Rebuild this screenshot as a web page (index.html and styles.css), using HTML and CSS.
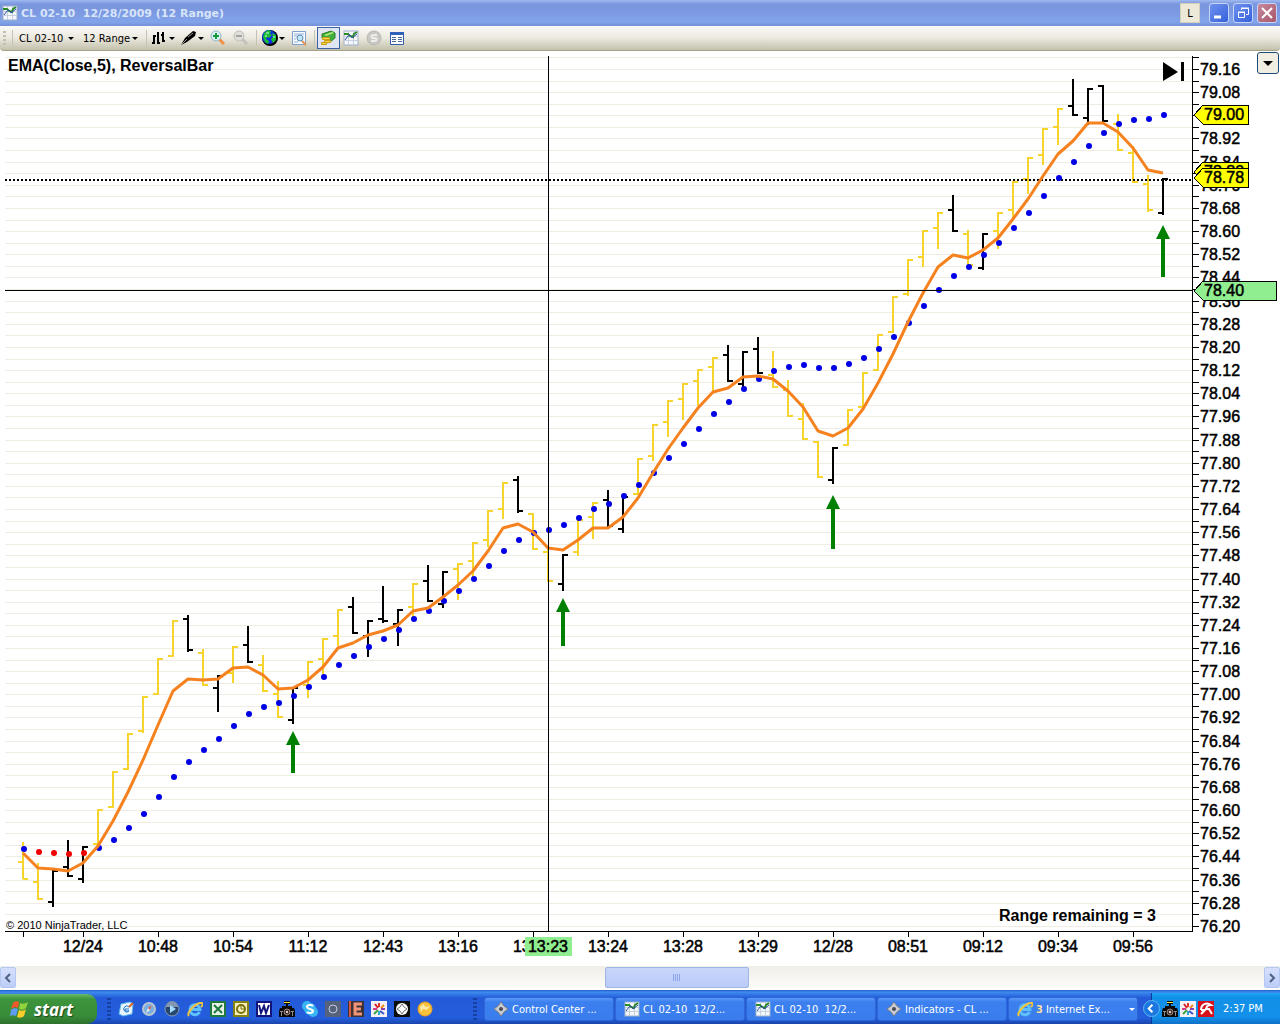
FILE: index.html
```html
<!DOCTYPE html>
<html lang="en">
  <head>
    <meta charset="UTF-8" />
    <meta name="viewport" content="width=device-width, initial-scale=1.0" />
    <title>CL 02-10 12/28/2009 (12 Range)</title>
    <link rel="stylesheet" href="styles.css" />
  </head>
  <body>
    <!-- shared icons -->
    <svg class="sprite" aria-hidden="true">
      <symbol id="i-chart" viewBox="0 0 16 16">
        <rect x="1" y="1" width="14" height="14" fill="#f4f7fb" stroke="#9fb0c8" />
        <path d="M1 6.500h14M1 10.500h14M5.500 1v14M10.500 1v14" stroke="#c6cfdd" />
        <path d="M1 4h4l2 2 3 1 1-3 3-2" fill="none" stroke="#2c8a2c" stroke-width="2" />
        <path d="M2 10l3-4 2-1 2 3 5-4" fill="none" stroke="#2f4fa8" />
      </symbol>
      <symbol id="i-ninja" viewBox="0 0 16 16">
        <path d="M8 1l3 4 4 3-4 3-3 4-3-4-4-3 4-3z" fill="#c9ccd2" stroke="#7a7d85" />
        <circle cx="8" cy="8" r="2" fill="#4a4d55" />
      </symbol>
      <symbol id="i-ie" viewBox="0 0 16 16">
        <path d="M12.500 11A5 5 0 1 1 13 8.500H5" fill="none" stroke="#5fc0fa" stroke-width="3" />
        <path d="M2 15C-1 12 9 1 15 2c2 1-1 4-1 4" fill="none" stroke="#f3c63c" stroke-width="2" />
      </symbol>
      <symbol id="i-camera" viewBox="0 0 16 16">
        <path d="M5 0h6v3H9v2h4v2h2l1 3v6H0v-6l1-3h2V5h4V3H5z" fill="#0a0a0a" />
        <path d="M5 1h6v1H5z" fill="#f5e53c" />
        <path d="M2.500 11v4M13.500 11v4M1 10.500h3M12 10.500h3" stroke="#8c8c8c" />
        <circle cx="8" cy="11" r="3" fill="#4a3030" stroke="#a08878" />
        <circle cx="8" cy="11" r="1" fill="#fff" />
      </symbol>
      <symbol id="i-burst" viewBox="0 0 16 16">
        <rect width="16" height="16" fill="#f4f0f4" />
        <g stroke-width="2">
          <path d="M8 6V2" stroke="#e0362c" /><path d="M10 7l3-3" stroke="#f08a1c" />
          <path d="M10 8h4" stroke="#8a3fb0" /><path d="M9 10l4 3" stroke="#3a56c8" />
          <path d="M8 10v4" stroke="#2aa8c8" /><path d="M7 9l-4 4" stroke="#39a845" />
          <path d="M6 8H2" stroke="#d63a8a" /><path d="M7 7L4 3" stroke="#d8242c" />
        </g>
      </symbol>
    </svg>

    <header class="titlebar">
      <svg class="icon"><use href="#i-chart" /></svg>
      <h1>CL 02-10&nbsp; 12/28/2009 (12 Range)</h1>
      <button class="link-btn" title="Link">L</button>
      <div class="window-btns">
        <button class="win" aria-label="Minimize">
          <svg viewBox="0 0 18 18"><path d="M4 13h7" stroke="#fff" stroke-width="3" /></svg>
        </button>
        <button class="win" aria-label="Restore">
          <svg viewBox="0 0 18 18" fill="none" stroke="#fff">
            <path d="M7.500 6V4.500h7v6H12M7 4h8" />
            <path d="M4.500 8.500h6v5h-6zM4 8h7" />
          </svg>
        </button>
        <button class="win close" aria-label="Close">
          <svg viewBox="0 0 18 18"><path d="M4 4l10 10M14 4L4 14" stroke="#fff" stroke-width="2" /></svg>
        </button>
      </div>
    </header>

    <nav class="toolbar">
      <span class="grip"></span>
      <span class="sep"></span>
      <button class="tool text">CL 02-10 <i class="caret"></i></button>
      <button class="tool text">12 Range <i class="caret"></i></button>
      <span class="sep"></span>
      <button class="tool drop" aria-label="Chart style">
        <svg class="icon" viewBox="0 0 16 16" fill="none" stroke="#000" stroke-width="2">
          <path d="M2 5v9M0 13h2M2 6h2M6 2v12M6 13h2M11 2v10M9 5h2M11 11h2" />
        </svg>
        <i class="caret"></i>
      </button>
      <button class="tool drop" aria-label="Drawing tools">
        <svg class="icon" viewBox="0 0 16 16">
          <path d="M0 15l4-7 8-7 3 1-1 4-8 6z" fill="#000" />
          <path d="M0 15l6-6M7 7l5-4" stroke="#8f8f8f" />
        </svg>
        <i class="caret"></i>
      </button>
      <button class="tool" aria-label="Zoom in">
        <svg class="icon" viewBox="0 0 16 16">
          <path d="M9 9l5 5" stroke="#f0914a" stroke-width="3" />
          <circle cx="6" cy="6" r="5" fill="#d8f0f2" stroke="#8fb9c8" />
          <path d="M3 6h6M6 3v6" stroke="#159a3c" stroke-width="2" />
        </svg>
      </button>
      <button class="tool" aria-label="Zoom out" disabled>
        <svg class="icon" viewBox="0 0 16 16">
          <path d="M9 9l5 5" stroke="#c3c1bb" stroke-width="3" />
          <circle cx="6" cy="6" r="5" fill="#e0dfdb" stroke="#c0beb8" />
          <path d="M3 6h6" stroke="#a6a49e" stroke-width="2" />
        </svg>
      </button>
      <span class="sep"></span>
      <button class="tool drop" aria-label="Data series">
        <svg class="icon" viewBox="0 0 16 16">
          <circle cx="8" cy="8" r="8" fill="#000" />
          <circle cx="7" cy="7" r="7" fill="#1030e0" />
          <path d="M2 3l4-3 3 1-1 3 2 1-3 3-2-1-1 2 3 2-1 3-3-2-2-5zM10 3l4 2v5l-3 3-2-4 2-2z" fill="#18c030" />
          <path d="M4 3h3M3 6h2M11 7h2" stroke="#d8f4ff" />
        </svg>
        <i class="caret"></i>
      </button>
      <button class="tool" aria-label="Data box">
        <svg class="icon" viewBox="0 0 16 16">
          <path d="M1.500 1.500h13v13h-13z" fill="#f6f9fe" stroke="#7fa0cc" />
          <path d="M3 4h10M3 6h3M3 9h2M3 12h4" stroke="#8fb0d8" />
          <path d="M11 11l4 4" stroke="#e8924c" stroke-width="2" />
          <circle cx="9" cy="8" r="3" fill="#c3e6f6" stroke="#5a8ab8" />
        </svg>
      </button>
      <span class="sep"></span>
      <button class="tool selected" aria-label="Chart trader">
        <svg class="icon" viewBox="0 0 16 16">
          <path d="M2 4l9-3 4 2v5l-5 4-3-1-5-3z" fill="#3fae3c" stroke="#2f8028" />
          <path d="M4 5l8-3 2 1-8 3z" fill="#b4e878" />
          <path d="M2.500 7.500h7v2h-7zM4.500 10.500h6v2h-6zM1.500 12.500h5v2h-5z" fill="#f8d83c" stroke="#c89c18" />
        </svg>
      </button>
      <button class="tool" aria-label="Indicators"><svg class="icon"><use href="#i-chart" /></svg></button>
      <button class="tool" aria-label="Strategies" disabled>
        <svg class="icon" viewBox="0 0 16 16">
          <circle cx="8" cy="8" r="7" fill="#c9c8c4" stroke="#b8b7b2" />
          <path d="M11 5H8C4 5 5 8 8 8s4 3 0 3H5" fill="none" stroke="#efede9" stroke-width="2" />
        </svg>
      </button>
      <button class="tool" aria-label="Properties">
        <svg class="icon" viewBox="0 0 16 16">
          <path d="M1.500 2.500h13v12h-13z" fill="#fff" stroke="#2f5fa8" />
          <path d="M1 3.500h14" stroke="#2f62b8" stroke-width="3" />
          <path d="M3 7.500h4M3 9.500h4M3 11.500h4M9 7.500h4M9 9.500h4M9 11.500h4" stroke="#4a6a9c" />
        </svg>
      </button>
    </nav>

    <main class="chart">
      <svg id="chart" viewBox="0 51 1280 915" role="img" aria-label="CL 02-10 range chart"></svg>
      <button class="chart-menu" aria-label="Axis menu"><i class="caret"></i></button>
    </main>

    <div class="scrollbar">
      <button class="arrow" aria-label="Scroll left">
        <svg viewBox="0 0 14 16"><path d="M9 4L5 8l4 4" fill="none" stroke="#4d6185" stroke-width="2" /></svg>
      </button>
      <div class="track"><div class="thumb"><i></i><i></i><i></i><i></i></div></div>
      <button class="arrow" aria-label="Scroll right">
        <svg viewBox="0 0 14 16"><path d="M5 4l4 4-4 4" fill="none" stroke="#4d6185" stroke-width="2" /></svg>
      </button>
    </div>

    <footer class="taskbar">
      <button class="start">
        <svg viewBox="0 0 20 18">
          <path d="M3 3c2-2 4-2 6-1L8 8C6 7 4 7 1 9z" fill="#f0582a" />
          <path d="M10 3c2 1 5 1 8-1l-2 6c-2 2-5 2-7 1z" fill="#8fd43c" />
          <path d="M1 10c2-2 5-2 7-1l-2 7c-2-1-4-1-6 0z" fill="#5f9cf4" />
          <path d="M9 10c2 1 5 1 7-1l-2 7c-2 2-5 2-7 1z" fill="#fbce2c" />
        </svg>
        start
      </button>

      <div class="quick">
        <span class="dots"></span>
        <a href="#" aria-label="Show desktop">
          <svg class="icon" viewBox="0 0 16 16">
            <path d="M3 3l9-2 3 2-1 10-9 2-4-2z" fill="#eaf6ff" stroke="#5ab4ea" />
            <path d="M11 6a3 3 0 1 0 0 4H7V8h4" fill="none" stroke="#1f78c8" />
            <path d="M11 6l4-4" stroke="#d86428" stroke-width="2" />
          </svg>
        </a>
        <a href="#" aria-label="Safari">
          <svg class="icon" viewBox="0 0 16 16">
            <circle cx="8" cy="8" r="6" fill="#78aee0" stroke="#b8c4d0" stroke-width="2" />
            <path d="M11 4L9 9l-4 3 2-5z" fill="#eef4fa" /><path d="M11 4L9 9 7 7z" fill="#c8574a" />
          </svg>
        </a>
        <a href="#" aria-label="Media player">
          <svg class="icon" viewBox="0 0 16 16">
            <circle cx="8" cy="8" r="7" fill="#26476e" stroke="#8a9cb4" />
            <path d="M2 6a6 6 0 0 1 12 0z" fill="#8296b0" />
            <path d="M6 4l6 4-6 4z" fill="#a8dcff" />
          </svg>
        </a>
        <a href="#" aria-label="Internet Explorer"><svg class="icon"><use href="#i-ie" /></svg></a>
        <a href="#" aria-label="Excel">
          <svg class="icon" viewBox="0 0 16 16">
            <rect width="16" height="16" fill="#1f7a3c" />
            <rect x="2" y="2" width="12" height="12" fill="#e6f2e6" />
            <path d="M4 4l8 8M12 4l-8 8" stroke="#1f7a3c" stroke-width="2" />
          </svg>
        </a>
        <a href="#" aria-label="Outlook">
          <svg class="icon" viewBox="0 0 16 16">
            <rect width="16" height="16" fill="#8a8210" />
            <rect x="2" y="2" width="12" height="12" fill="#f4f0c0" />
            <circle cx="8" cy="8" r="4" fill="none" stroke="#7c7408" stroke-width="2" />
            <path d="M8 5v3h3" fill="none" stroke="#7c7408" />
          </svg>
        </a>
        <a href="#" aria-label="Word">
          <svg class="icon" viewBox="0 0 16 16">
            <rect width="16" height="16" fill="#10147c" />
            <rect x="2" y="2" width="12" height="12" fill="#fff" />
            <path d="M3 4l2 8 3-7 2 7 3-8" fill="none" stroke="#10147c" stroke-width="2" />
          </svg>
        </a>
        <a href="#" aria-label="Camera"><svg class="icon"><use href="#i-camera" /></svg></a>
        <a href="#" aria-label="Skype">
          <svg class="icon" viewBox="0 0 16 16">
            <circle cx="5" cy="5" r="5" fill="#3ab6f2" /><circle cx="11" cy="11" r="5" fill="#3ab6f2" />
            <circle cx="8" cy="8" r="6" fill="#3ab6f2" />
            <path d="M11 5C9 3 5 4 5 6s6 2 6 4-4 3-6 1" fill="none" stroke="#fff" stroke-width="2" />
          </svg>
        </a>
        <a href="#" aria-label="Recorder">
          <svg class="icon" viewBox="0 0 16 16">
            <rect width="16" height="16" fill="#56617c" />
            <circle cx="8" cy="8" r="4" fill="none" stroke="#c4cede" />
          </svg>
        </a>
        <a href="#" aria-label="eSignal">
          <svg class="icon" viewBox="0 0 16 16">
            <rect width="16" height="16" fill="#3a3236" />
            <path d="M2 0v16" stroke="#d8583c" stroke-width="2" />
            <path d="M14 3H7v10h7M7 8h6" fill="none" stroke="#f09478" stroke-width="3" />
          </svg>
        </a>
        <a href="#" aria-label="Photos"><svg class="icon"><use href="#i-burst" /></svg></a>
        <a href="#" aria-label="NinjaTrader">
          <svg class="icon" viewBox="0 0 16 16">
            <rect width="16" height="16" fill="#0c0c0c" />
            <circle cx="8" cy="8" r="6" fill="#fff" />
            <path d="M8 3l2 3 3 2-3 2-2 3-2-3-3-2 3-2z" fill="#fff" stroke="#777" />
          </svg>
        </a>
        <a href="#" aria-label="Messenger">
          <svg class="icon" viewBox="0 0 16 16">
            <circle cx="8" cy="8" r="7" fill="#f9c23a" stroke="#f0a020" />
            <path d="M3 6l3-3 3 3 4-1-3 4-4-1-2 3z" fill="#fde9a8" />
          </svg>
        </a>
      </div>

      <div class="tasks">
        <span class="dots"></span>
        <button class="task"><svg class="icon"><use href="#i-ninja" /></svg>Control Center ...</button>
        <button class="task"><svg class="icon"><use href="#i-chart" /></svg>CL 02-10&nbsp; 12/2...</button>
        <button class="task"><svg class="icon"><use href="#i-chart" /></svg>CL 02-10&nbsp; 12/2...</button>
        <button class="task"><svg class="icon"><use href="#i-ninja" /></svg>Indicators - CL ...</button>
        <button class="task group">
          <svg class="icon"><use href="#i-ie" /></svg><b>3</b>Internet Ex... <i class="caret"></i>
        </button>
      </div>

      <div class="tray">
        <button class="expand" aria-label="Show hidden icons">
          <svg viewBox="0 0 16 16"><path d="M9 4L5 8l4 4" fill="none" stroke="#fff" stroke-width="2" /></svg>
        </button>
        <svg class="icon"><use href="#i-camera" /></svg>
        <svg class="icon"><use href="#i-burst" /></svg>
        <svg class="icon" viewBox="0 0 16 16">
          <rect width="16" height="16" fill="#d8101c" />
          <path d="M3 9c0-6 6-8 10-5-3 0-5 2-5 5" fill="none" stroke="#fff" stroke-width="2" />
          <path d="M3 13l5-5h3l3 5M3 9h5" fill="none" stroke="#fff" stroke-width="2" />
        </svg>
        <time>2:37 PM</time>
      </div>
    </footer>

    <script src="chart.js"></script>
  </body>
</html>
```
FILE: styles.css
```css
* {
  box-sizing: border-box;
}
body {
  margin: 0;
  background: #fff;
  font-family: "DejaVu Sans Condensed", "Open Sans", sans-serif;
  font-size: 11px;
  color: #000;
}
button {
  font: inherit;
  color: inherit;
  border: none;
  background: none;
  padding: 0;
  cursor: pointer;
}
svg {
  display: block;
}
.sprite {
  position: absolute;
  width: 0;
  height: 0;
}
.icon {
  width: 16px;
  height: 16px;
  flex: none;
}
.caret {
  flex: none;
  border: 3px solid transparent;
  border-top-color: #000;
  border-bottom: none;
}

/* title bar */
.titlebar {
  display: flex;
  align-items: center;
  height: 26px;
  padding: 0 3px 0 2px;
  background: linear-gradient(180deg, #9fbaf0, #7a96df 4px, #7a97e0 10px, #82a4ea 22px, #7590d8);
}
.titlebar h1 {
  flex: 1;
  margin: 0 0 0 3px;
  font-family: "DejaVu Sans", sans-serif;
  font-size: 11px;
  font-weight: bold;
  color: #d8e4f8;
}
.link-btn {
  width: 20px;
  height: 20px;
  background: #ece9d8;
  border: 1px solid #d5cfba;
}
.window-btns {
  display: flex;
  gap: 4px;
  margin-left: 9px;
}
.win {
  width: 20px;
  height: 20px;
  border: 1px solid #c6d4f6;
  border-radius: 3px;
  background: linear-gradient(135deg, #6f92ee, #3560dc);
}
.win.close {
  background: linear-gradient(135deg, #c58a9c, #a8566a);
}

/* toolbar */
.toolbar {
  display: flex;
  align-items: center;
  height: 25px;
  background: linear-gradient(180deg, #fbfaf8, #ebe8df 12px, #c3c1ab);
  border-bottom: 1px solid #a3a388;
  border-radius: 0 0 4px 4px;
}
.grip {
  width: 3px;
  height: 15px;
  margin: 0 3px 0 3px;
  background: repeating-linear-gradient(180deg, #c3c0b2 0 2px, transparent 2px 4px);
}
.sep {
  width: 1px;
  height: 16px;
  margin: 0 2px 0 3px;
  background: #c5c2b4;
}
.tool {
  display: flex;
  align-items: center;
  width: 23px;
  height: 22px;
  padding: 0 3px;
}
.tool.text {
  width: 64px;
  padding: 0 5px 0 4px;
  justify-content: space-between;
}
.tool.drop {
  width: 29px;
  gap: 1px;
}
.tool.selected {
  background: #dfe6f2;
  border: 1px solid #3a62a8;
  padding: 0 2px;
}

/* chart */
.chart {
  position: relative;
}
.chart svg {
  width: 100%;
  height: auto;
}
.chart text {
  font-family: "Liberation Sans", Arial, sans-serif;
  font-size: 16px;
  stroke: #000;
  stroke-width: 0.5px;
}
.chart .middle {
  text-anchor: middle;
}
.chart text.strong {
  font-weight: bold;
  stroke: none;
}
.chart text.copyright {
  font-size: 11px;
  stroke: none;
}
.grid,
.axis,
.bar,
.cross,
.last,
.tag {
  fill: none;
  shape-rendering: crispEdges;
}
.grid {
  stroke: #efece4;
}
.axis,
.cross {
  stroke: #000;
}
.bar {
  stroke: #000;
  stroke-width: 2;
}
.bar.gold {
  stroke: #f6d42c;
}
.last {
  stroke: #000;
  stroke-width: 2;
  stroke-dasharray: 2 2;
}
.ema {
  fill: none;
  stroke: #f5821e;
  stroke-width: 3;
  stroke-linejoin: round;
}
.dot {
  fill: #0000e6;
}
.dot.red {
  fill: #f00000;
}
.up {
  fill: #008000;
}
.tag {
  fill: #ff0;
  stroke: #000;
}
.tag.cursor,
.time-cursor {
  fill: #90ee90;
}
.chart-menu {
  position: absolute;
  top: 1px;
  right: 1px;
  width: 22px;
  height: 22px;
  display: flex;
  align-items: center;
  justify-content: center;
  background: #f0eee2;
  border: 1px solid #1c4a78;
  border-radius: 3px;
}
.chart-menu .caret {
  border-width: 5px 5px 0;
}

/* horizontal scrollbar */
.scrollbar {
  display: flex;
  height: 24px;
  padding: 1px 0 2px;
  background: linear-gradient(180deg, #f0eee8, #fdfdfb);
}
.arrow {
  width: 16px;
  border: 1px solid #b4c6f2;
  border-radius: 2px;
  background: linear-gradient(180deg, #d5e0fc, #bccdf8);
}
.track {
  flex: 1;
}
.thumb {
  display: flex;
  align-items: center;
  justify-content: center;
  gap: 1px;
  width: 11.5%;
  height: 100%;
  margin-left: 47.2%;
  border: 1px solid #9fb5e6;
  border-radius: 2px;
  background: linear-gradient(180deg, #c8d6fb, #bacbf8);
}
.thumb i {
  width: 1px;
  height: 7px;
  background: #8ca6e8;
}

/* taskbar */
.taskbar {
  display: flex;
  align-items: center;
  height: 34px;
  color: #fff;
  background: linear-gradient(180deg, #1e5ac8, #3f8cee 2px, #2f74e4 5px, #245ad8 8px, #245edc 28px, #1a44ac);
}
.start {
  display: flex;
  align-items: center;
  gap: 4px;
  width: 97px;
  height: 30px;
  margin-top: 4px;
  padding-left: 10px;
  border-radius: 0 10px 10px 0;
  background: linear-gradient(180deg, #6cbc68, #3c943c 5px, #388c38 22px, #2c702c);
  font-family: "Open Sans", sans-serif;
  font-size: 17px;
  font-weight: bold;
  font-style: italic;
  text-shadow: 1px 1px 1px #1c481c;
}
.start svg {
  width: 20px;
  height: 18px;
}
.quick {
  display: flex;
  align-items: center;
  gap: 7px;
  margin: 4px 0 0 10px;
}
.dots {
  width: 4px;
  height: 22px;
  flex: none;
  background: repeating-linear-gradient(180deg, #1740a4 0 2px, transparent 2px 4px);
}
.tasks {
  flex: 1;
  display: flex;
  align-items: center;
  gap: 1px;
  height: 26px;
  margin: 4px 0 0 40px;
}
.tasks .dots {
  margin-right: 6px;
}
.task {
  flex: 1;
  display: flex;
  align-items: center;
  gap: 3px;
  height: 24px;
  padding-left: 8px;
  border: 1px solid #2e66d6;
  border-radius: 3px;
  background: linear-gradient(180deg, #5a9af8, #3c80f0 4px, #3a7cec);
  white-space: nowrap;
}
.task b {
  color: #f8dca0;
}
.task .caret {
  margin-left: auto;
  margin-right: 2px;
  border-top-color: #fff;
}
.tray {
  position: relative;
  display: flex;
  align-items: center;
  gap: 2px;
  width: 129px;
  height: 31px;
  margin: 3px 0 0 13px;
  padding-left: 10px;
  border-left: 1px solid #0c3c9c;
  background: linear-gradient(180deg, #20a8f4, #1290e8 4px, #1390ea 24px, #0f70c8);
}
.expand {
  position: absolute;
  left: -9px;
  width: 17px;
  height: 17px;
  border-radius: 50%;
  border: 1px solid #5cb4f4;
  background: #1c78e0;
}
.tray time {
  margin-left: 7px;
}
```
FILE: chart.js
```js
const svg = document.getElementById("chart");
const NS = "http://www.w3.org/2000/svg";

const LEFT = 5;
const RIGHT = 1192;
const TOP = 57;
const BOTTOM = 931;
const FIRST_BAR = 23;
const BAR_STEP = 15;
const RANGE = 35; // every bar covers 12 ticks

// [open, high, close], gold bars are inside the swing, black ones mark reversals
const bars = [
  [862, 843, 879], [882, 864, 899], [902, 871, 871], [867, 841, 876], [879, 847, 847],
  [844, 810, 810], [807, 772, 772], [769, 734, 734], [731, 697, 697], [694, 659, 659],
  [656, 621, 621], [619, 616, 650], [653, 650, 685], [688, 676, 676], [673, 647, 647],
  [645, 627, 662], [665, 656, 691], [694, 682, 717], [720, 688, 688], [685, 662, 662],
  [659, 639, 639], [636, 610, 610], [607, 598, 633], [636, 621, 621], [619, 587, 621],
  [624, 610, 610], [607, 584, 584], [581, 566, 601], [604, 572, 572], [569, 564, 564],
  [561, 543, 543], [540, 511, 511], [509, 483, 483], [480, 477, 511], [514, 514, 549],
  [552, 546, 581], [584, 555, 555], [552, 520, 520], [517, 503, 503], [500, 491, 526],
  [529, 497, 497], [494, 459, 459], [456, 425, 425], [422, 401, 401], [399, 384, 384],
  [381, 370, 370], [367, 358, 358], [355, 346, 381], [384, 352, 352], [349, 338, 373],
  [375, 352, 387], [390, 381, 416], [419, 404, 439], [442, 442, 477], [480, 448, 448],
  [445, 410, 410], [407, 373, 373], [370, 335, 335], [332, 297, 297], [294, 260, 260],
  [257, 231, 231], [228, 213, 213], [210, 196, 231], [234, 231, 265], [268, 234, 234],
  [231, 213, 213], [210, 182, 182], [179, 158, 158], [155, 129, 129], [127, 109, 109],
  [106, 80, 115], [118, 89, 89], [86, 86, 121], [124, 115, 150], [153, 147, 182],
  [184, 176, 210], [213, 179, 179],
];
const black = [2, 3, 4, 11, 13, 15, 18, 22, 23, 24, 25, 27, 28, 33, 36, 39, 40, 47, 48, 49, 54, 62, 64, 70, 71, 72, 76];

const ema = [
  853, 868, 869, 871, 863, 846, 821, 792, 760, 725, 691, 679, 680, 679, 668, 667, 675, 689, 688, 680,
  667, 648, 643, 635, 631, 625, 611, 608, 597, 585, 571, 551, 528, 524, 532, 548, 550, 540, 528, 528,
  517, 498, 473, 449, 428, 408, 392, 388, 377, 376, 379, 391, 407, 431, 436, 428, 409, 383, 354, 322,
  293, 267, 255, 258, 250, 238, 219, 199, 176, 154, 141, 123, 123, 132, 148, 170, 173,
];
const dots = [
  849, 852, 853, 854, 853, 848, 840, 828, 814, 797, 777, 762, 750, 739, 726, 714, 707, 703, 696, 687,
  677, 665, 656, 647, 639, 630, 619, 611, 601, 591, 579, 566, 551, 540, 533, 530, 525, 518, 509, 504,
  496, 485, 473, 458, 444, 429, 414, 402, 389, 379, 371, 367, 365, 368, 368, 364, 358, 349, 337, 323,
  306, 290, 276, 267, 255, 243, 228, 213, 196, 178, 162, 146, 133, 124, 120, 119, 115,
];
const times = ["12/24", "10:48", "10:54", "11:12", "12:43", "13:16", "13:22", "13:24", "13:28", "13:29", "12/28", "08:51", "09:12", "09:34", "09:56"];
const arrows = [[293, 731, 773], [563, 598, 646], [833, 495, 549], [1163, 225, 277]];

function add(tag, className, attrs, text) {
  const el = document.createElementNS(NS, tag);
  el.setAttribute("class", className);
  for (const key in attrs) el.setAttribute(key, attrs[key]);
  if (text) el.textContent = text;
  svg.appendChild(el);
}

function path(className, d) {
  add("path", className, { d });
}

function label(x, y, text, className = "") {
  add("text", className, { x, y }, text);
}

function priceY(price) {
  return Math.round(69 + (79.16 - price) * 289.5);
}

// grid and price axis
for (let i = 0; i <= 75; i++) {
  const price = (79.2 - i * 0.04).toFixed(2);
  const y = priceY(price) + 0.5;
  path("grid", `M${LEFT} ${y}H${RIGHT}`);
  path("axis", `M${RIGHT} ${y}h7`);
  // 79.00 is covered by its own marker
  if (i % 2 && price !== "79.00") label(1200, y + 5.5, price);
}
path("axis", `M${RIGHT + 0.5} ${TOP - 1}V${BOTTOM + 0.5}H${LEFT}`);

// time axis
path("axis", `M${FIRST_BAR + 0.5} ${BOTTOM}v6`);
times.forEach((time, i) => {
  const x = 83 + i * 75;
  path("axis", `M${x + 0.5} ${BOTTOM}v6`);
  label(x, 952, time, "middle");
});

// range bars
bars.forEach(([open, high, close], i) => {
  const x = FIRST_BAR + i * BAR_STEP;
  const color = black.includes(i) ? "" : " gold";
  path("bar" + color, `M${x - 5} ${open}h5M${x} ${high - 1}V${high + RANGE + 1}M${x} ${close}h5`);
});

path("last", `M${LEFT} 180H${RIGHT}`);
dots.forEach((y, i) => {
  const red = i > 0 && i < 5 ? " red" : "";
  add("circle", "dot" + red, { cx: FIRST_BAR + 1 + i * BAR_STEP, cy: y, r: 3 });
});
add("polyline", "ema", { points: ema.map((y, i) => `${FIRST_BAR + i * BAR_STEP},${y}`).join(" ") });
arrows.forEach(([x, top, end]) => {
  path("up", `M${x} ${top}l7 14h-5V${end}h-4V${top + 14}h-5z`);
});

// crosshair
path("cross", `M548.5 ${TOP - 1}V${BOTTOM}M${LEFT} 290.5H${RIGHT}`);

// price markers
function tag(y, right, text, className = "") {
  path("tag " + className, `M1194 ${y}L1203 ${y - 10}H${right}V${y + 9}H1203z`);
  label(1204, y + 5, text);
}
tag(172, 1248, "78.80");
tag(178, 1248, "78.78");
tag(115, 1248, "79.00");
tag(291, 1276, "78.40", "cursor");

add("rect", "time-cursor", { x: 525, y: 937, width: 47, height: 19 });
label(548, 952, "13:23", "middle");

label(8, 71, "EMA(Close,5), ReversalBar", "strong");
label(999, 921, "Range remaining = 3", "strong");
label(6, 929, "© 2010 NinjaTrader, LLC", "copyright");
path("end", "M1163 62l15 10-15 9zM1181 62h3v19h-3z");
```
